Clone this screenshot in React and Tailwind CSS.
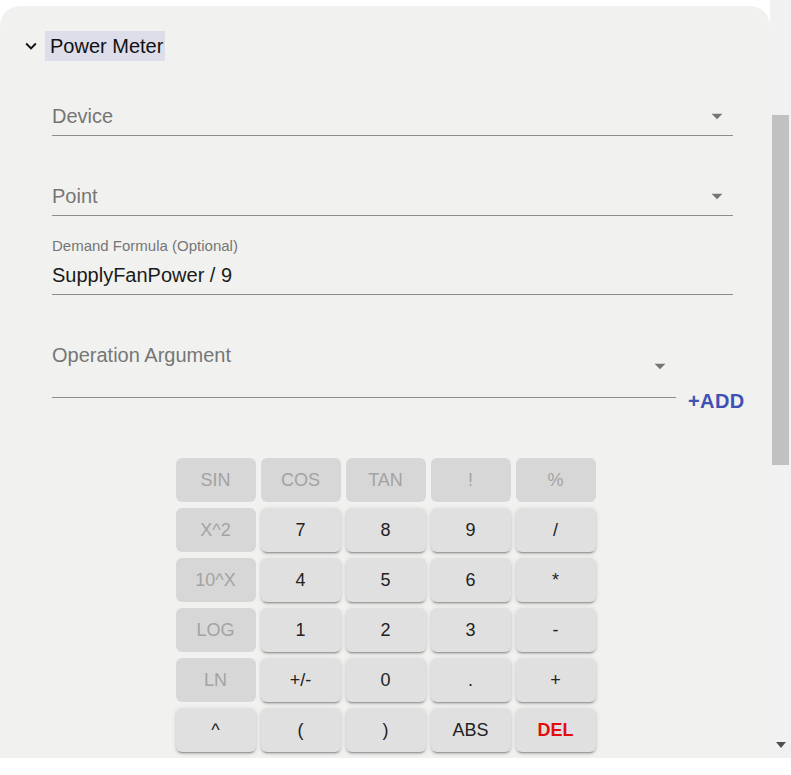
import React from 'react';

const keys = [
  { label: 'SIN', off: true },
  { label: 'COS', off: true },
  { label: 'TAN', off: true },
  { label: '!', off: true },
  { label: '%', off: true },
  { label: 'X^2', off: true },
  { label: '7' },
  { label: '8' },
  { label: '9' },
  { label: '/' },
  { label: '10^X', off: true },
  { label: '4' },
  { label: '5' },
  { label: '6' },
  { label: '*' },
  { label: 'LOG', off: true },
  { label: '1' },
  { label: '2' },
  { label: '3' },
  { label: '-' },
  { label: 'LN', off: true },
  { label: '+/-' },
  { label: '0' },
  { label: '.' },
  { label: '+' },
  { label: '^' },
  { label: '(' },
  { label: ')' },
  { label: 'ABS' },
  { label: 'DEL', danger: true },
];

function DropArrow() {
  return (
    <svg viewBox="0 0 24 24" className="w-[26px] h-[26px] fill-[#757575] shrink-0">
      <path d="M7 10l5 5 5-5z" />
    </svg>
  );
}

function SelectField({ label }) {
  return (
    <div className="flex items-center justify-between border-b border-[#8d8d8d] pb-[6px] pr-[3px]">
      <span className="text-[20px] leading-6 text-[#767676]">{label}</span>
      <DropArrow />
    </div>
  );
}

function Key({ k }) {
  if (k.off) {
    return (
      <div className="h-[44px] rounded-[6px] bg-[#d7d7d7] flex items-center justify-center text-[18px] text-[#a3a3a3]">
        {k.label}
      </div>
    );
  }
  return (
    <button
      className={
        'h-[44px] rounded-[6px] bg-[#e0e0e0] flex items-center justify-center text-[18px] shadow-[0_3px_1px_-2px_rgba(0,0,0,0.2),0_2px_2px_0_rgba(0,0,0,0.14),0_1px_5px_0_rgba(0,0,0,0.12)] ' +
        (k.danger ? 'font-bold text-[#e30d0d]' : 'text-[#222]')
      }
    >
      {k.label}
    </button>
  );
}

export default function App() {
  return (
    <div className="w-[791px] h-[775px] bg-white font-['Liberation_Sans',Arial,sans-serif]">
      <div className="flex h-[758px] overflow-hidden">
        <div className="w-[770px] pt-[6px] shrink-0">
          <div className="h-full bg-[#f1f2f0] rounded-t-[20px] pt-[25px]">
            {/* header */}
            <div className="flex items-center pl-[20px]">
              <svg viewBox="0 0 24 24" className="w-[22px] h-[22px] fill-[#111]">
                <path d="M16.59 8.59 12 13.17 7.41 8.59 6 10l6 6 6-6z" />
              </svg>
              <div className="ml-[3px] h-[30px] pl-[5px] pr-[2px] bg-[#dddeea] flex items-center text-[20px] text-[#111]">
                Power Meter
              </div>
            </div>

            <div className="pl-[52px] pr-[37px]">
              <div className="mt-[42px]">
                <SelectField label="Device" />
              </div>
              <div className="mt-[47px]">
                <SelectField label="Point" />
              </div>

              <div className="mt-[21px] border-b border-[#8d8d8d] pb-[7px]">
                <div className="text-[15px] leading-[18px] text-[#767676]">Demand Formula (Optional)</div>
                <div className="mt-[8px] text-[20px] leading-6 text-[#1a1a1a]">SupplyFanPower / 9</div>
              </div>

              <div className="mt-[48px] flex items-end w-[693px]">
                <div className="w-[624px] shrink-0 border-b border-[#8d8d8d] pr-[3px]">
                  <div className="text-[20px] leading-6 text-[#767676]">Operation Argument</div>
                  <div className="flex justify-end h-[30px] items-start">
                    <div className="-mt-[14px]">
                      <DropArrow />
                    </div>
                  </div>
                </div>
                <button className="ml-[12px] -mb-[15px] shrink-0 text-[20px] leading-6 font-bold tracking-[0.02em] text-[#3f51b5]">
                  +ADD
                </button>
              </div>
            </div>

            <div className="mt-[60px] flex justify-center pl-[1px]">
              <div className="grid grid-cols-[repeat(5,80px)] gap-x-[5px] gap-y-[6px]">
                {keys.map((k) => (
                  <Key key={k.label} k={k} />
                ))}
              </div>
            </div>
          </div>
        </div>

        {/* scrollbar */}
        <div className="relative w-[21px] bg-[#f1f1f1]">
          <div className="absolute left-[2px] top-[115px] w-[17px] h-[350px] bg-[#c1c1c1]" />
          <svg viewBox="0 0 10 6" className="absolute left-[6px] top-[742px] w-[10px] h-[6px] fill-[#505050]">
            <path d="M0 0h10L5 6z" />
          </svg>
        </div>
      </div>
    </div>
  );
}
